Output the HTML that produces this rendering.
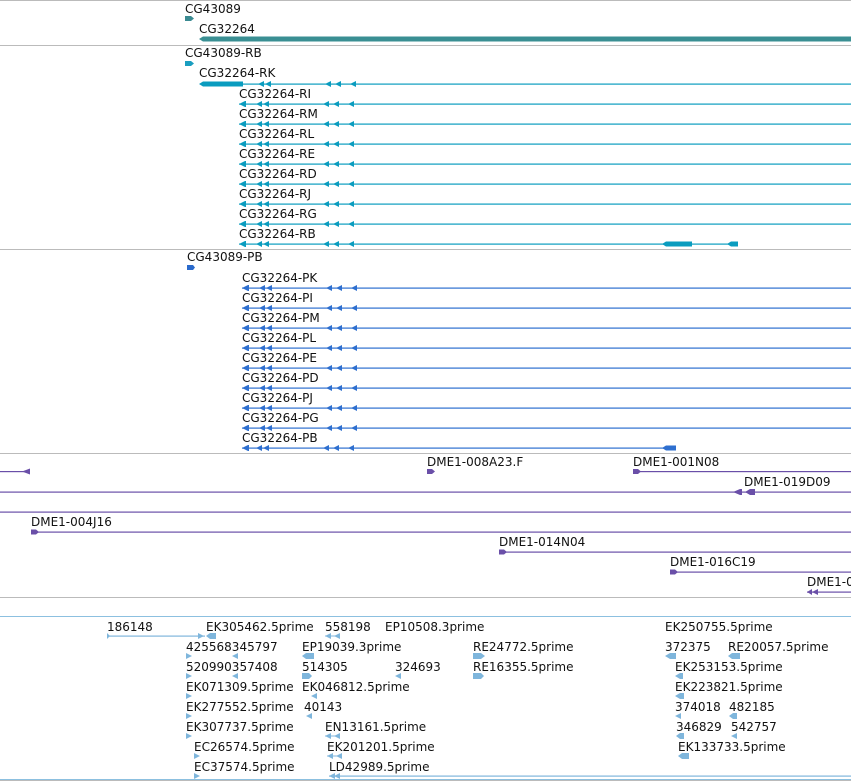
<!DOCTYPE html>
<html><head><meta charset="utf-8"><style>
html,body{margin:0;padding:0;background:#fff;width:851px;height:781px;overflow:hidden}
svg text{font-family:"DejaVu Sans","Liberation Sans",sans-serif;font-size:12px;fill:#111}
</style></head><body>
<svg width="851" height="781" viewBox="0 0 851 781" xmlns="http://www.w3.org/2000/svg">
<defs>
<polygon id="la" points="0,0 6,-3 6,3"/>
<g id="tr">
<rect x="0" y="-0.5" width="612" height="1.2"/>
<polygon points="0,0 6,-3 7,-3 7,3 6,3"/>
<use href="#la" x="17"/><use href="#la" x="24"/>
<use href="#la" x="84"/><use href="#la" x="94"/><use href="#la" x="109"/>
</g>
</defs>
<g stroke="none">
<rect x="0" y="0" width="851" height="1" fill="#bbb"/>
<rect x="0" y="45" width="851" height="1" fill="#bbb"/>
<rect x="0" y="249" width="851" height="1" fill="#bbb"/>
<rect x="0" y="453" width="851" height="1" fill="#bbb"/>
<rect x="0" y="597" width="851" height="1" fill="#bbb"/>
<rect x="0" y="616" width="851" height="1" fill="#8cc0e0"/>
<rect x="0" y="779" width="851" height="1" fill="#8cc0e0"/>
<rect x="0" y="780" width="851" height="1" fill="#bbb"/>
</g>
<!-- genes -->
<text x="185" y="13">CG43089</text>
<polygon points="185,16 191,16 194,18.5 191,21 185,21" fill="#3a8a91"/>
<text x="199" y="33">CG32264</text>
<polygon points="199,39 203,36.5 851,36.5 851,41.5 203,41.5" fill="#3a8f93"/>
<text x="185" y="57">CG43089-RB</text>
<polygon points="185,61 191,61 194,63.5 191,66 185,66" fill="#1a9ec0"/>
<text x="199" y="77">CG32264-RK</text>
<g fill="#0a9cbf">
<polygon points="199,84 203,81.5 243,81.5 243,86.5 203,86.5"/>
<rect x="243" y="83.5" width="608" height="1.2"/>
<use href="#la" x="258" y="84"/><use href="#la" x="265" y="84"/>
<use href="#la" x="325" y="84"/><use href="#la" x="335" y="84"/><use href="#la" x="350" y="84"/>
</g>
<text x="239" y="98">CG32264-RI</text>
<text x="239" y="118">CG32264-RM</text>
<text x="239" y="138">CG32264-RL</text>
<text x="239" y="158">CG32264-RE</text>
<text x="239" y="178">CG32264-RD</text>
<text x="239" y="198">CG32264-RJ</text>
<text x="239" y="218">CG32264-RG</text>
<text x="239" y="238">CG32264-RB</text>
<g fill="#0a9cbf">
<use href="#tr" x="239" y="104"/><use href="#tr" x="239" y="124"/><use href="#tr" x="239" y="144"/>
<use href="#tr" x="239" y="164"/><use href="#tr" x="239" y="184"/><use href="#tr" x="239" y="204"/>
<use href="#tr" x="239" y="224"/>
<rect x="239" y="243.5" width="499" height="1.2"/>
<polygon points="239,244 245,241 246,241 246,247 245,247"/>
<use href="#la" x="256" y="244"/><use href="#la" x="263" y="244"/>
<use href="#la" x="323" y="244"/><use href="#la" x="333" y="244"/><use href="#la" x="348" y="244"/>
<polygon points="662,244 666,241.5 692,241.5 692,246.5 666,246.5"/>
<polygon points="727,244 731,241.5 738,241.5 738,246.5 731,246.5"/>
</g>
<text x="187" y="261">CG43089-PB</text>
<polygon points="187,265 193,265 195,267.5 193,270 187,270" fill="#2a6acc"/>
<text x="242" y="282">CG32264-PK</text>
<text x="242" y="302">CG32264-PI</text>
<text x="242" y="322">CG32264-PM</text>
<text x="242" y="342">CG32264-PL</text>
<text x="242" y="362">CG32264-PE</text>
<text x="242" y="382">CG32264-PD</text>
<text x="242" y="402">CG32264-PJ</text>
<text x="242" y="422">CG32264-PG</text>
<text x="242" y="442">CG32264-PB</text>
<g fill="#2e6fcf">
<use href="#tr" x="242" y="288"/><use href="#tr" x="242" y="308"/><use href="#tr" x="242" y="328"/>
<use href="#tr" x="242" y="348"/><use href="#tr" x="242" y="368"/><use href="#tr" x="242" y="388"/>
<use href="#tr" x="242" y="408"/><use href="#tr" x="242" y="428"/>
<rect x="242" y="447.5" width="434" height="1.2"/>
<polygon points="242,448 248,445 249,445 249,451 248,451"/>
<use href="#la" x="256" y="448"/><use href="#la" x="263" y="448"/>
<use href="#la" x="323" y="448"/><use href="#la" x="333" y="448"/><use href="#la" x="348" y="448"/>
<polygon points="662,448 666,445.5 676,445.5 676,450.5 666,450.5"/>
</g>
<!-- clones -->
<g fill="#6a4fa8">
<rect x="0" y="471" width="30" height="1.2"/>
<polygon points="22,471.5 30,468.5 30,474.5"/>
<polygon points="427,469 432,469 435,471.5 432,474 427,474"/>
<rect x="633" y="471" width="218" height="1.2"/>
<polygon points="633,469 638,469 641,471.5 638,474 633,474"/>
<rect x="0" y="491.5" width="851" height="1.2"/>
<polygon points="733,492 740,489 742,489 742,495 740,495"/>
<polygon points="745,492 750,489 755,489 755,495 750,495"/>
<rect x="0" y="511.5" width="851" height="1.2"/>
<rect x="31" y="531.5" width="820" height="1.2"/>
<polygon points="31,529.5 36,529.5 39,532 36,534.5 31,534.5"/>
<rect x="499" y="551.5" width="352" height="1.2"/>
<polygon points="499,549.5 504,549.5 507,552 504,554.5 499,554.5"/>
<rect x="670" y="571.5" width="181" height="1.2"/>
<polygon points="670,569.5 675,569.5 678,572 675,574.5 670,574.5"/>
<rect x="807" y="591.5" width="44" height="1.2"/>
<polygon points="807,592 812,589 812,595"/><polygon points="812,592 818,589 818,595"/>
</g>
<text x="427" y="466">DME1-008A23.F</text>
<text x="633" y="466">DME1-001N08</text>
<text x="744" y="486">DME1-019D09</text>
<text x="31" y="526">DME1-004J16</text>
<text x="499" y="546">DME1-014N04</text>
<text x="670" y="566">DME1-016C19</text>
<text x="807" y="586">DME1-0</text>
<!-- ESTs -->
<g fill="#7fb6dc">
<rect x="107" y="635.5" width="98" height="1.2"/>
<polygon points="107,633 110,636 107,639"/><polygon points="198,633 204,636 198,639"/>
<polygon points="206,636 210,633 216,633 216,639 210,639"/>
<polygon points="325,636 331,633 331,639"/><rect x="325" y="635.5" width="15" height="1"/><polygon points="334,636 340,633 340,639"/>
<polygon points="186,653 192,656 186,659"/><polygon points="232,656 238,653 238,659"/>
<polygon points="302,656 306,653 314,653 314,659 306,659"/>
<polygon points="473,653 481,653 485,656 481,659 473,659"/>
<polygon points="665,656 670,653 676,653 676,659 670,659"/>
<polygon points="728,656 732,653 740,653 740,659 732,659"/>
<polygon points="186,673 192,676 186,679"/><polygon points="232,676 238,673 238,679"/>
<polygon points="302,673 309,673 312,676 309,679 302,679"/>
<polygon points="395,676 401,673 401,679"/>
<polygon points="473,673 481,673 484,676 481,679 473,679"/>
<polygon points="675,676 680,673 683,673 683,679 680,679"/>
<polygon points="186,693 192,696 186,699"/>
<polygon points="311,696 317,693 317,699"/>
<polygon points="675,696 680,693 684,693 684,699 680,699"/>
<polygon points="186,713 192,716 186,719"/>
<polygon points="306,716 312,713 312,719"/>
<polygon points="675,716 681,713 681,719"/>
<polygon points="729,716 733,713 737,713 737,719 733,719"/>
<polygon points="186,733 192,736 186,739"/>
<polygon points="325,736 331,733 331,739"/><rect x="325" y="735.5" width="15" height="1"/><polygon points="334,736 340,733 340,739"/>
<polygon points="676,736 680,733 684,733 684,739 680,739"/>
<polygon points="731,736 737,733 737,739"/>
<polygon points="194,753 200,756 194,759"/>
<polygon points="327,756 333,753 333,759"/><rect x="327" y="755.5" width="15" height="1"/><polygon points="336,756 342,753 342,759"/>
<polygon points="678,756 682,753 689,753 689,759 682,759"/>
<polygon points="194,773 200,776 194,779"/>
<polygon points="329,776 335,773 335,779"/><polygon points="334,776 340,773 340,779"/><rect x="329" y="775.5" width="522" height="1.2"/>
</g>
<text x="107" y="631">186148</text>
<text x="206" y="631">EK305462.5prime</text>
<text x="325" y="631">558198</text>
<text x="385" y="631">EP10508.3prime</text>
<text x="665" y="631">EK250755.5prime</text>
<text x="186" y="651">425568345797</text>
<text x="302" y="651">EP19039.3prime</text>
<text x="473" y="651">RE24772.5prime</text>
<text x="665" y="651">372375</text>
<text x="728" y="651">RE20057.5prime</text>
<text x="186" y="671">520990357408</text>
<text x="302" y="671">514305</text>
<text x="395" y="671">324693</text>
<text x="473" y="671">RE16355.5prime</text>
<text x="675" y="671">EK253153.5prime</text>
<text x="186" y="691">EK071309.5prime</text>
<text x="302" y="691">EK046812.5prime</text>
<text x="675" y="691">EK223821.5prime</text>
<text x="186" y="711">EK277552.5prime</text>
<text x="304" y="711">40143</text>
<text x="675" y="711">374018</text>
<text x="729" y="711">482185</text>
<text x="186" y="731">EK307737.5prime</text>
<text x="325" y="731">EN13161.5prime</text>
<text x="676" y="731">346829</text>
<text x="731" y="731">542757</text>
<text x="194" y="751">EC26574.5prime</text>
<text x="327" y="751">EK201201.5prime</text>
<text x="678" y="751">EK133733.5prime</text>
<text x="194" y="771">EC37574.5prime</text>
<text x="329" y="771">LD42989.5prime</text>
</svg>
</body></html>
